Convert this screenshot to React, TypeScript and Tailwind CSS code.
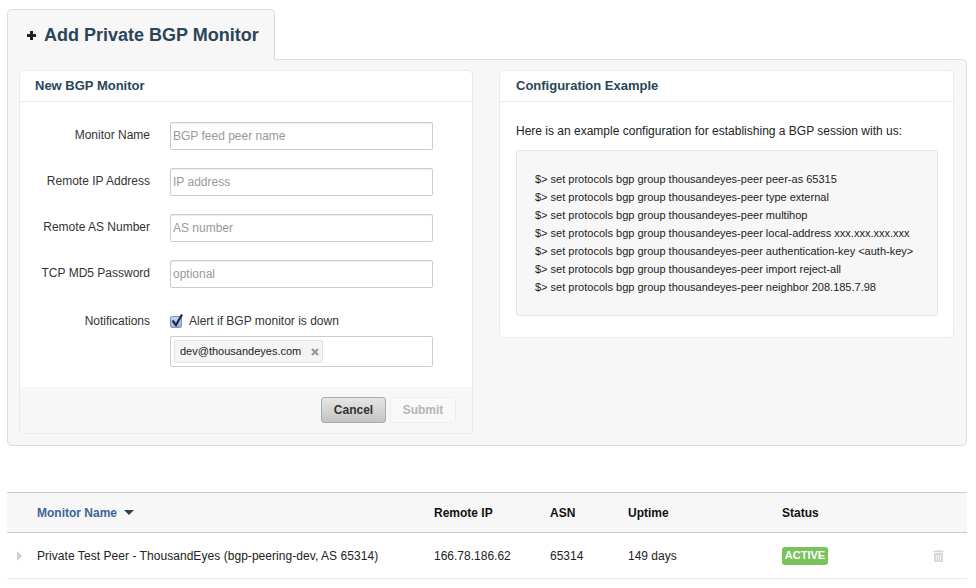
import { FaTrashAlt } from "react-icons/fa";

const fields = [
  { label: "Monitor Name", placeholder: "BGP feed peer name" },
  { label: "Remote IP Address", placeholder: "IP address" },
  { label: "Remote AS Number", placeholder: "AS number" },
  { label: "TCP MD5 Password", placeholder: "optional" },
];

const configLines = [
  "$> set protocols bgp group thousandeyes-peer peer-as 65315",
  "$> set protocols bgp group thousandeyes-peer type external",
  "$> set protocols bgp group thousandeyes-peer multihop",
  "$> set protocols bgp group thousandeyes-peer local-address xxx.xxx.xxx.xxx",
  "$> set protocols bgp group thousandeyes-peer authentication-key <auth-key>",
  "$> set protocols bgp group thousandeyes-peer import reject-all",
  "$> set protocols bgp group thousandeyes-peer neighbor 208.185.7.98",
];

export default function App() {
  return (
    <div className="w-[976px] h-[588px] overflow-hidden bg-white pl-[7px] pr-[9px] pt-[9px] font-['Liberation_Sans',Arial,sans-serif] text-[12px] text-[#222]">
      {/* Tab */}
      <div className="relative z-10 -mb-px flex h-[51px] w-[268px] items-center gap-[8px] rounded-t-[5px] border border-b-0 border-[#ddd] bg-[#f7f7f7] pl-[19px]">
        <svg viewBox="0 0 9 9" className="h-[9px] w-[9px]">
          <path d="M3 0h3v3h3v3H6v3H3V6H0V3h3z" fill="#222" />
        </svg>
        <span className="text-[18px] font-bold text-[#2b4558]">Add Private BGP Monitor</span>
      </div>

      {/* Panel */}
      <div className="flex h-[387px] items-start gap-[26px] rounded-b-[5px] rounded-tr-[5px] border border-[#ddd] bg-[#f7f7f7] pl-[11px] pt-[10px]">
        {/* New monitor form */}
        <div className="w-[454px] overflow-hidden rounded-[5px] border border-[#e6ebf0] bg-white">
          <div className="flex h-[31px] items-center border-b border-[#eee] pl-[15px] text-[13px] font-bold text-[#2b4558]">
            New BGP Monitor
          </div>
          <div className="flex flex-col gap-[18px] pt-[20px]">
            {fields.map((field) => (
              <div key={field.label} className="flex">
                <div className="w-[130px] pt-[6px] text-right leading-[15px] text-[#333]">{field.label}</div>
                <input
                  readOnly
                  placeholder={field.placeholder}
                  className="ml-[20px] h-[28px] w-[263px] rounded-[2px] border border-[#ccc] bg-white px-[2px] text-[12px] shadow-[inset_0_1px_1px_rgba(0,0,0,0.08)] outline-none placeholder:text-[#999]"
                />
              </div>
            ))}
          </div>
          <div className="mt-[26px] flex">
            <div className="w-[130px] text-right leading-[15px] text-[#333]">Notifications</div>
            <div className="ml-[20px] w-[263px]">
              <div className="flex h-[15px] items-center gap-[7px] leading-[15px] text-[#333]">
                <span className="relative h-[12px] w-[12px] rounded-[2px] border border-[#7f93b5] bg-gradient-to-b from-[#c9d9f2] to-[#8fb2e6]">
                  <svg viewBox="0 0 14 14" className="absolute -left-[1px] -top-[4px] h-[14px] w-[14px]">
                    <path d="M2.500 7.500 6 12 12 1.500" fill="none" stroke="#1e2a3a" strokeWidth="2.2" />
                  </svg>
                </span>
                Alert if BGP monitor is down
              </div>
              <div className="mt-[7px] flex h-[31px] items-center rounded-[2px] border border-[#ccc] pl-[3px]">
                <span className="flex h-[23px] w-[149px] items-center rounded-[2px] border border-[#e3e3e3] bg-[#f5f5f5] pl-[5px] text-[11px] text-[#222]">
                  dev@thousandeyes.com
                  <svg viewBox="0 0 8 8" className="ml-[10px] h-[8px] w-[8px]">
                    <path d="M1 1l6 6M7 1L1 7" fill="none" stroke="#999" strokeWidth="2.2" />
                  </svg>
                </span>
              </div>
            </div>
          </div>
          <div className="mt-[20px] flex h-[46px] items-start justify-end gap-[4px] bg-[#f7f7f7] pr-[16px] pt-[10px]">
            <button className="h-[26px] w-[65px] rounded-[3px] border border-[#aaa] bg-gradient-to-b from-[#e6e6e6] to-[#c4c4c4] font-bold text-[#333]">
              Cancel
            </button>
            <button className="h-[26px] w-[66px] rounded-[3px] border border-[#eee] bg-[#f9f9f9] font-bold text-[#b5b5b5]">
              Submit
            </button>
          </div>
        </div>

        {/* Config example */}
        <div className="h-[268px] w-[455px] overflow-hidden rounded-[5px] border border-[#e6ebf0] bg-white">
          <div className="flex h-[31px] items-center border-b border-[#eee] pl-[16px] text-[13px] font-bold text-[#2b4558]">
            Configuration Example
          </div>
          <p className="pl-[16px] pt-[22px] leading-[15px] text-[#222]">
            Here is an example configuration for establishing a BGP session with us:
          </p>
          <div className="ml-[16px] mt-[11px] h-[166px] w-[422px] rounded-[3px] border border-[#e6e6e6] bg-[#f7f7f7] pl-[18px] pt-[19px] text-[11px] leading-[18px] text-[#222]">
            {configLines.map((line) => (
              <div key={line}>{line}</div>
            ))}
          </div>
        </div>
      </div>

      {/* Monitors table */}
      <div className="mt-[46px]">
        <div className="grid h-[41px] grid-cols-[30px_397px_116px_78px_154px_1fr] items-center border-y border-[#ccc] bg-[#f7f7f7] font-bold text-[#111]">
          <span />
          <span className="flex items-center gap-[7px] text-[#3b6597]">
            Monitor Name
            <svg viewBox="0 0 10 5" className="h-[5px] w-[10px]">
              <path d="M0 0h10L5 5z" fill="#2b4558" />
            </svg>
          </span>
          <span>Remote IP</span>
          <span>ASN</span>
          <span>Uptime</span>
          <span>Status</span>
        </div>
        <div className="grid h-[46px] grid-cols-[30px_397px_116px_78px_154px_1fr] items-center border-b border-[#e8e8e8] text-[#222]">
          <svg viewBox="0 0 5 10" className="ml-[10px] h-[10px] w-[5px]">
            <path d="M0 0l5 5-5 5z" fill="#ccd0d4" />
          </svg>
          <span className="tracking-[0.05px]">Private Test Peer - ThousandEyes (bgp-peering-dev, AS 65314)</span>
          <span>166.78.186.62</span>
          <span>65314</span>
          <span>149 days</span>
          <div className="flex items-center justify-between pr-[23px]">
            <span className="flex h-[18px] w-[46px] items-center justify-center rounded-[3px] bg-[#7ac25a] text-[11px] font-bold text-white">
              ACTIVE
            </span>
            <FaTrashAlt className="h-[12px] w-[11px] text-[#d5d8da]" />
          </div>
        </div>
      </div>
    </div>
  );
}
